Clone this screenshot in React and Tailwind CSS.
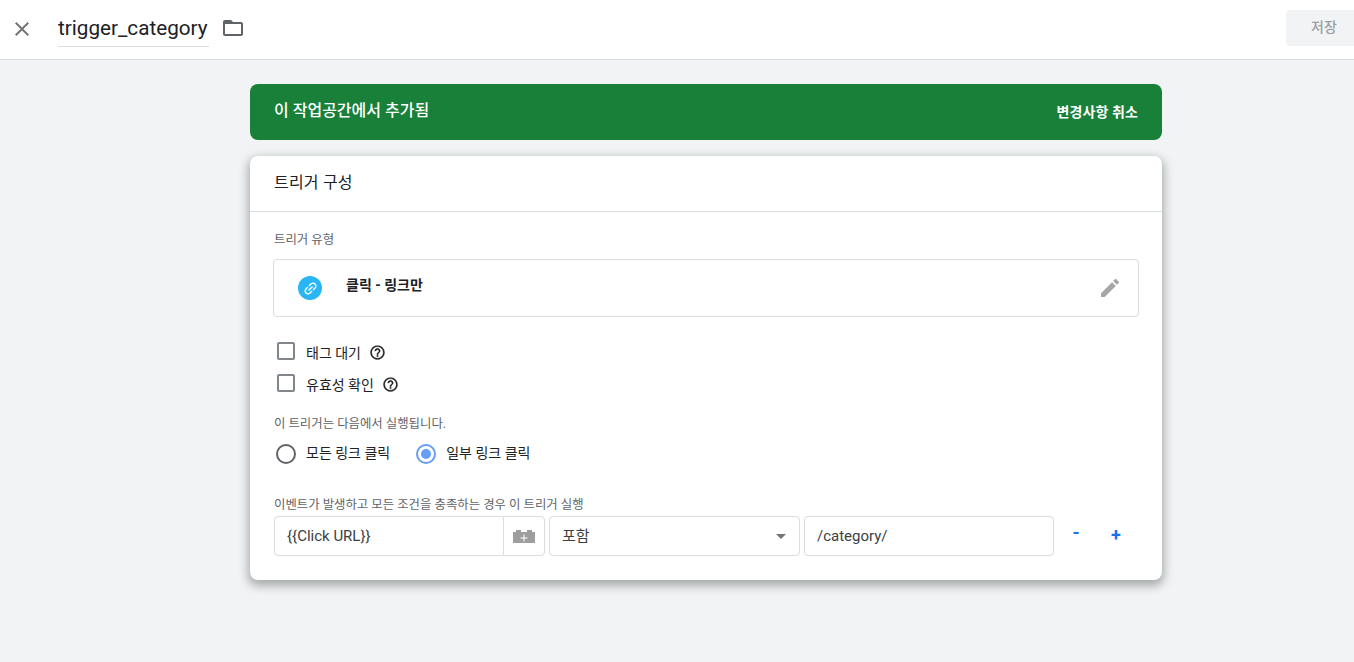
function Checkbox({ label }) {
  return (
    <div className="flex items-center h-[32px]">
      <span className="w-[18px] h-[18px] ml-[3px] mt-[-2px] border-2 border-[#80868b] rounded-[2px]" />
      <span className="ml-[11px] mt-[2px] text-[14px] text-[#202124]">{label}</span>
      <svg viewBox="0 0 24 24" className="w-[17px] h-[17px] ml-[8px] mt-[1px]" fill="#202124" stroke="#202124" strokeWidth="0.3">
        <path d="M11 18h2v-2h-2v2zm1-16C6.48 2 2 6.48 2 12s4.48 10 10 10 10-4.48 10-10S17.52 2 12 2zm0 18c-4.41 0-8-3.59-8-8s3.59-8 8-8 8 3.59 8 8-3.59 8-8 8zm0-14c-2.21 0-4 1.79-4 4h2c0-1.1.9-2 2-2s2 .9 2 2c0 2-3 1.75-3 5h2c0-2.25 3-2.5 3-5 0-2.21-1.79-4-4-4z" />
      </svg>
    </div>
  );
}

export default function App() {
  return (
    <div className="w-[1354px] h-[662px] overflow-hidden bg-[#f1f3f4] font-['Roboto','Noto_Sans_CJK_KR',sans-serif]">
      <header className="h-[60px] bg-white border-b border-[#dadce0] flex items-center">
        <svg viewBox="0 0 24 24" className="w-[24px] h-[24px] ml-[10px] mt-[-2px]" fill="#757575">
          <path d="M19 6.41 17.59 5 12 10.59 6.41 5 5 6.41 10.59 12 5 17.59 6.41 19 12 13.41 17.59 19 19 17.59 13.41 12z" />
        </svg>
        <div className="ml-[24px] w-[151px] h-[36px] border-b border-[#dadce0] text-[20.7px] leading-[34px] text-[#202124] mt-[-1px] whitespace-nowrap">trigger_category</div>
        <svg viewBox="0 0 24 24" className="w-[24px] h-[24px] ml-[12px] mt-[-4px]" fill="#5f6368">
          <path d="M20 6h-8l-2-2H4c-1.1 0-1.99.9-1.99 2L2 18c0 1.1.9 2 2 2h16c1.1 0 2-.9 2-2V8c0-1.1-.9-2-2-2zm0 12H4V8h16v10z" />
        </svg>
        <div className="ml-auto mt-[-4px] w-[68px] h-[36px] bg-[#f1f3f4] rounded-l-[4px] text-[14px] font-medium text-[#9aa0a6] flex items-center pl-[25px]">저장</div>
      </header>

      <main className="w-[912px] ml-[250px] pt-[24px]">
        <div className="h-[56px] bg-[#188038] rounded-[8px] flex items-center justify-between px-[24px] text-white">
          <span className="text-[16px] font-medium mt-[-3px]">이 작업공간에서 추가됨</span>
          <span className="text-[14px] font-bold tracking-[0.1px]">변경사항 취소</span>
        </div>

        <section className="mt-[16px] h-[424px] bg-white rounded-[8px] shadow-[0_4px_10px_2px_rgba(60,64,67,0.4)]">
          <div className="h-[56px] border-b border-[#dadce0] pl-[24px] flex items-center text-[16px] text-[#202124]">
            <span className="mt-[-2px] tracking-[0.2px]">트리거 구성</span>
          </div>

          <div className="px-[24px]">
            <div className="pt-[20px] text-[12.4px] leading-[16px] text-[#5f6368]">트리거 유형</div>

            <div className="-mx-[1px] mt-[11px] h-[58px] border border-[#dadce0] rounded-[4px] flex items-center pl-[24px] pr-[16px]">
              <span className="w-[24px] h-[24px] rounded-full bg-[#29b6f6] flex items-center justify-center">
                <svg viewBox="0 0 24 24" className="w-[17px] h-[17px] -rotate-45" fill="white">
                  <path d="M3.9 12c0-1.71 1.39-3.1 3.1-3.1h4V7H7c-2.76 0-5 2.24-5 5s2.24 5 5 5h4v-1.9H7c-1.71 0-3.1-1.39-3.1-3.1zM8 13h8v-2H8v2zm9-6h-4v1.9h4c1.71 0 3.1 1.39 3.1 3.1s-1.39 3.1-3.1 3.1h-4V17h4c2.76 0 5-2.24 5-5s-2.24-5-5-5z" />
                </svg>
              </span>
              <span className="ml-[24px] text-[14px] font-bold text-[#202124] mt-[-5px]">클릭 - 링크만</span>
              <svg viewBox="0 0 24 24" className="w-[24px] h-[24px] ml-auto mt-[-1px]" fill="#a6a6a6">
                <path d="M3 17.25V21h3.75L17.81 9.94l-3.75-3.75L3 17.25zM20.71 7.04a1 1 0 0 0 0-1.41l-2.34-2.34a1 1 0 0 0-1.41 0l-1.83 1.83 3.75 3.75 1.83-1.83z" />
              </svg>
            </div>

            <div className="mt-[19px]">
              <Checkbox label="태그 대기" />
              <Checkbox label="유효성 확인" />
            </div>

            <div className="mt-[16px] text-[12.4px] leading-[16px] text-[#5f6368]">이 트리거는 다음에서 실행됩니다.</div>

            <div className="mt-[6px] flex items-center h-[32px]">
              <span className="w-[20px] h-[20px] ml-[2px] rounded-full border-2 border-[#5f6368]" />
              <span className="ml-[10px] text-[14px] text-[#202124] mt-[-2px]">모든 링크 클릭</span>
              <span className="w-[20px] h-[20px] ml-[26px] rounded-full border-2 border-[#669df6] flex items-center justify-center">
                <span className="w-[10px] h-[10px] rounded-full bg-[#669df6]" />
              </span>
              <span className="ml-[10px] text-[14px] text-[#202124] mt-[-2px]">일부 링크 클릭</span>
            </div>

            <div className="mt-[27px] text-[12.4px] leading-[16px] text-[#5f6368]">이벤트가 발생하고 모든 조건을 충족하는 경우 이 트리거 실행</div>

            <div className="mt-[3px] flex items-center text-[15px] text-[#3c4043]">
              <div className="w-[271px] h-[40px] border border-[#dadce0] rounded-[4px] flex">
                <div className="flex-1 pl-[12px] flex items-center">{'{{Click URL}}'}</div>
                <div className="w-[41px] border-l border-[#dadce0] flex items-center justify-center">
                  <svg viewBox="0 0 24 16" className="w-[24px] h-[16px]">
                    <path fill="#9e9e9e" d="M1 4h3V2h5v2h6V2h5v2h3v11H1z" />
                    <path fill="#fff" d="M11.5 6.5h1v3h3v1h-3v3h-1v-3h-3v-1h3z" />
                  </svg>
                </div>
              </div>
              <div className="ml-[4px] w-[251px] h-[40px] border border-[#dadce0] rounded-[4px] flex items-center justify-between px-[12px]">
                <span>포함</span>
                <span className="w-0 h-0 mr-[1px] border-x-[5px] border-x-transparent border-t-[5px] border-t-[#757575]" />
              </div>
              <div className="ml-[4px] w-[250px] h-[40px] border border-[#dadce0] rounded-[4px] flex items-center pl-[12px]">/category/</div>
              <span className="ml-[17px] w-[10px] text-center text-[18px] font-bold leading-none text-[#1a73e8] mt-[-6px]">-</span>
              <span className="ml-[29px] w-[12px] text-center text-[18px] font-bold leading-none text-[#1a73e8] mt-[-2px]">+</span>
            </div>
          </div>
        </section>
      </main>
    </div>
  );
}
